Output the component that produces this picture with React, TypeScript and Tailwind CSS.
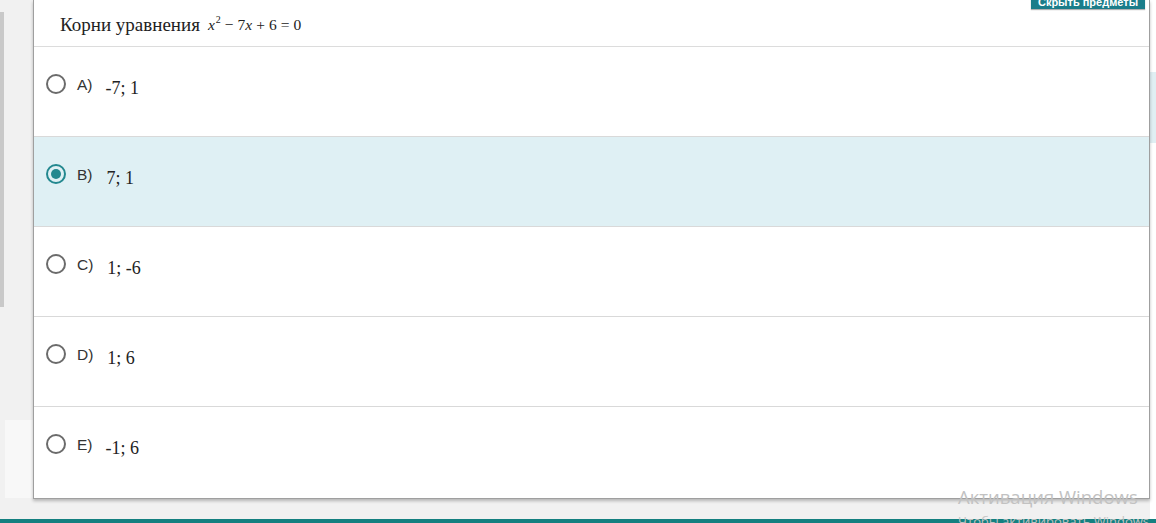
import React from "react";

const options = [
  { key: "A)", text: "-7; 1" },
  { key: "B)", text: "7; 1", selected: true },
  { key: "C)", text: "1; -6" },
  { key: "D)", text: "1; 6" },
  { key: "E)", text: "-1; 6" },
];

function Radio({ checked }: { checked?: boolean }) {
  return checked ? (
    <span className="flex h-[20px] w-[20px] items-center justify-center rounded-full border-2 border-[#23888f]">
      <span className="h-[10px] w-[10px] rounded-full bg-[#23888f]" />
    </span>
  ) : (
    <span className="h-[20px] w-[20px] rounded-full border-2 border-[#6b6b6b] bg-white" />
  );
}

export default function App() {
  return (
    <div className="relative h-[523px] w-[1156px] overflow-hidden bg-[#f1f1f1]">
      {/* background page behind the dialog */}
      <div className="flex h-[519px]">
        <div className="mt-[12px] h-[295px] w-[4px] bg-[#c9c9c9]" />
        <div className="flex flex-1 flex-col">
          <div className="flex-1" />
          <div className="ml-[1px] mb-[21px] h-[78px] w-[28px] bg-[#f8f8f8]" />
        </div>
        <div className="flex w-[6px] flex-col bg-white">
          <div className="h-[72px]" />
          <div className="h-[71px] bg-[#e0eff3]" />
        </div>
      </div>
      <div className="h-[4px] bg-[#148080]" />

      {/* dialog */}
      <div className="absolute left-[33px] top-0 w-[1117px] border border-t-0 border-[#9f9f9f] bg-white shadow-[0_2px_3px_rgba(0,0,0,0.25)]">
        <div
          className="flex h-[47px] items-center border-b border-[#dcdcdc] pl-[26px] pt-[4px] text-[19px] text-[#222]"
          style={{ fontFamily: '"Liberation Serif", serif' }}
        >
          <span>Корни уравнения</span>
          <span className="ml-[8px] text-[15.5px]">
            <i>x</i>
            <sup className="ml-[1px] top-[-7px] text-[10px]">2</sup>
            <span className="mx-[4px]">−</span>7<i>x</i>
            <span className="mx-[4px]">+</span>6<span className="mx-[4px]">=</span>0
          </span>
        </div>
        {options.map((o, i) => (
          <div
            key={o.key}
            className={`flex h-[90px] items-start pl-[12px] pt-[27px] ${
              i < options.length - 1 ? "border-b border-[#d9d9d9]" : "h-[91px]"
            } ${o.selected ? "bg-[#dff0f4]" : "bg-white"}`}
          >
            <Radio checked={o.selected} />
            <span
              className="ml-[11px] mt-[-1px] text-[15.5px] text-[#333]"
              style={{ fontFamily: '"Liberation Sans", Arial, sans-serif' }}
            >
              {o.key}
            </span>
            <span
              className={`${o.key === "A)" || o.key === "E)" ? "ml-[13px]" : "ml-[14px]"} mt-[1px] text-[18px] text-[#222]`}
              style={{ fontFamily: '"Liberation Serif", serif' }}
            >
              {o.text}
            </span>
          </div>
        ))}
      </div>

      <button
        className="absolute left-[1031px] top-[-6px] h-[15px] w-[114px] bg-[#1b7d8a] text-[11px] font-bold leading-[13px] text-white shadow-[0_1px_1px_rgba(0,0,0,0.3)]"
        style={{ fontFamily: '"Liberation Sans", Arial, sans-serif' }}
      >
        <span className="relative top-[1px]">Скрыть предметы</span>
      </button>

      {/* Windows activation watermark */}
      <div
        className="pointer-events-none absolute left-[958px] top-[488px] leading-none text-[#c2c2c2]"
        style={{ fontFamily: '"Open Sans", "Liberation Sans", sans-serif' }}
      >
        <div className="text-[18.5px]">Активация Windows</div>
        <div className="mt-[8px] text-[13px]">Чтобы активировать Windows</div>
      </div>
    </div>
  );
}
